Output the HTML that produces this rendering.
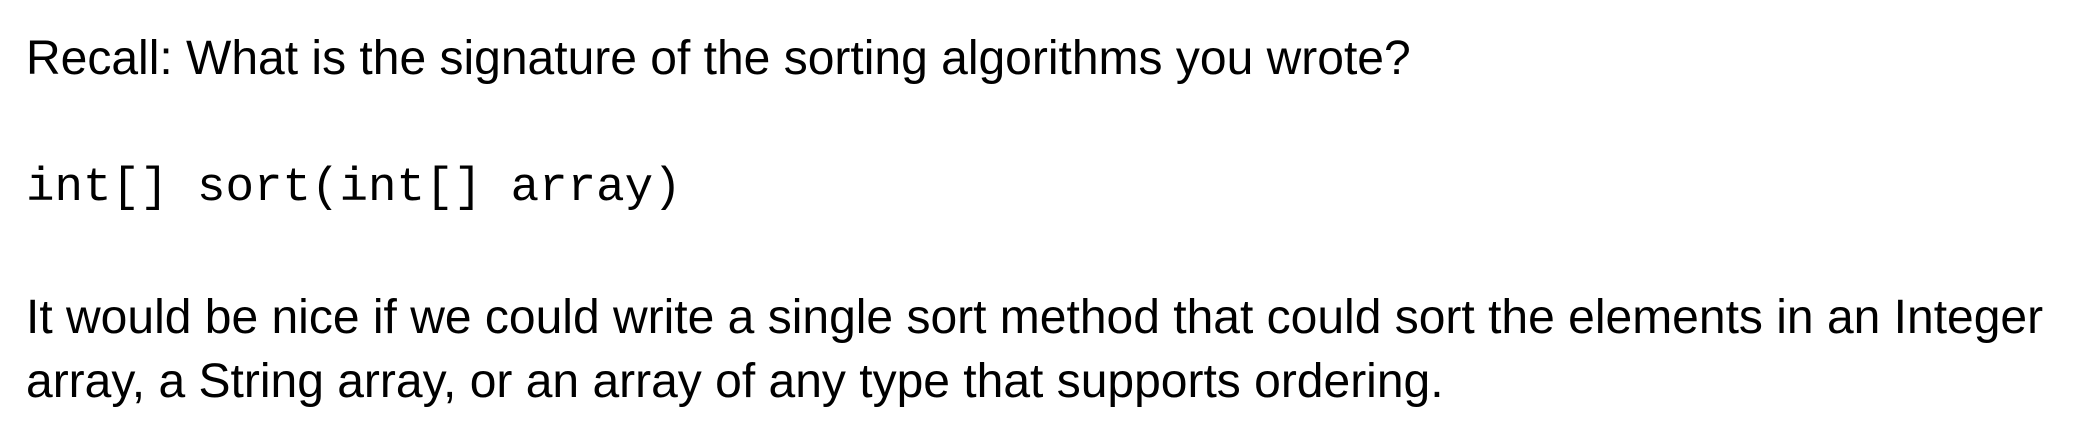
<!DOCTYPE html>
<html><head><style>
html,body{margin:0;padding:0;background:#fff;width:2094px;height:442px;overflow:hidden}
.t{position:absolute;left:26px;font-family:"Liberation Sans",Arial,sans-serif;font-size:48px;color:#000;white-space:nowrap;line-height:1}
.m{position:absolute;left:26px;font-family:"Liberation Mono","Courier New",monospace;font-size:47.5px;color:#000;white-space:nowrap;line-height:1}
</style></head><body>
<div class="t" style="top:35px">Recall: What is the signature of the sorting algorithms you wrote?</div>
<div class="m" style="top:165px">int[] sort(int[] array)</div>
<div class="t" style="top:294px">It would be nice if we could write a single sort method that could sort the elements in an Integer</div>
<div class="t" style="top:358px">array, a String array, or an array of any type that supports ordering.</div>
</body></html>
